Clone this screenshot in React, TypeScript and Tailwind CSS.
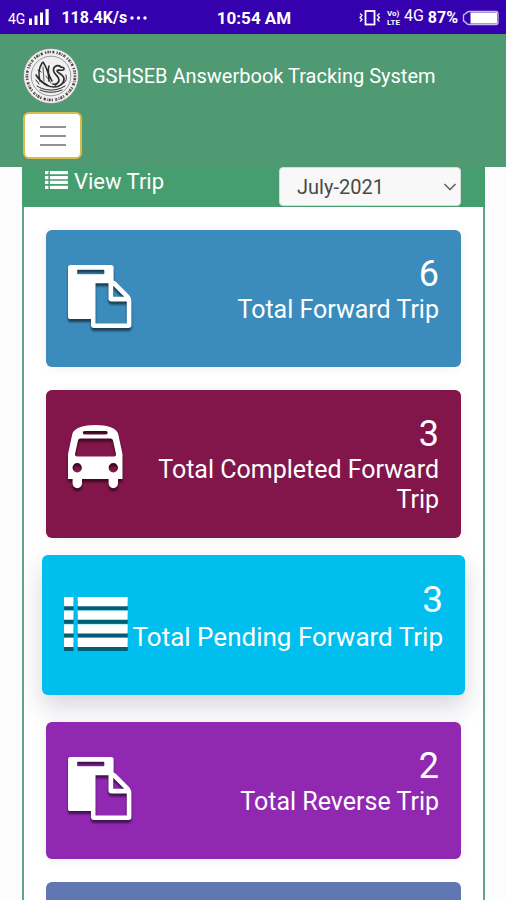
import type { ReactNode } from "react";

function ListIcon({ className }: { className: string }) {
  return (
    <svg viewBox="0 0 64 50" preserveAspectRatio="none" fill="currentColor" className={className} aria-hidden="true">
      {[0, 13.6, 27.2, 40.8].map((y) => (
        <g key={y}>
          <rect x="0" y={y} width="9.5" height="9.2" rx="0.6" />
          <rect x="13.7" y={y} width="50" height="9.2" rx="0.6" />
        </g>
      ))}
    </svg>
  );
}

function PasteIcon() {
  return (
    <svg viewBox="0 0 64 64" fill="currentColor" fillRule="evenodd" className="h-16 w-16 shrink-0 drop-shadow-[0_3px_1px_rgba(0,0,0,0.55)]" aria-hidden="true">
      <path d="M2.6 0H43a2.6 2.6 0 0 1 2.6 2.6V15.5c1 .3 1.900 .9 2.700 1.700L60.500 29.500c1.800 1.800 2.900 4.300 2.900 6.500V60a3 3 0 0 1-3 3H26a3 3 0 0 1-3-3V54H2.600A2.600 2.600 0 0 1 0 51.400V2.600A2.600 2.600 0 0 1 2.600 0ZM10 4.800a.8.800 0 0 0-.8.800v2.800a.8.800 0 0 0 .8.800H35.500a.8.800 0 0 0 .8-.8V5.600a.8.800 0 0 0-.8-.8ZM27.500 18.200V58.500H58.800V36.400H43.500a3 3 0 0 1-3-3V18.200ZM45.200 20.800V31.700H56.200Z" />
    </svg>
  );
}

function BusIcon() {
  return (
    <svg viewBox="0 0 55 64" fill="currentColor" fillRule="evenodd" className="h-16 w-[55px] shrink-0 drop-shadow-[0_3px_1px_rgba(0,0,0,0.55)]" aria-hidden="true">
      <path d="M27.500 0C39 0 49 3.200 50.200 9L54.500 29V54H50V58.500a4.700 4.700 0 0 1-9.400 0V54H14V58.500a4.700 4.700 0 0 1-9.400 0V54H0V29L4.300 9C5.500 3.200 16 0 27.500 0ZM16.500 6a1.700 1.700 0 0 0 0 3.400H38a1.700 1.700 0 0 0 0-3.400ZM12.500 13.500a2.500 2.500 0 0 0-2.500 2L7 29a2 2 0 0 0 2 2.500H46a2 2 0 0 0 2-2.500L45 15.500a2.500 2.500 0 0 0-2.500-2ZM9.200 38a4.700 4.700 0 1 0 0 9.400a4.700 4.700 0 1 0 0-9.400ZM45.300 38a4.700 4.700 0 1 0 0 9.400a4.700 4.700 0 1 0 0-9.400Z" />
    </svg>
  );
}

function Emblem() {
  return (
    <svg viewBox="0 0 56 56" className="h-14 w-14 shrink-0" fill="none" role="img" aria-label="GSHSEB emblem">
      <circle cx="28" cy="28" r="27.500" fill="#f1f0f0" stroke="#6d7b74" strokeWidth="0.6" />
      <circle cx="28" cy="28" r="24" stroke="#4a464b" strokeWidth="2.600" strokeDasharray="1.300 1 2.200 .8 .9 1.200 2.200 2.200" />
      <circle cx="28" cy="28" r="24" stroke="#f1f0f0" strokeWidth="0.500" strokeDasharray="2 2.500" />
      <circle cx="28" cy="28" r="19.800" stroke="#777" strokeWidth="0.700" />
      <g stroke="#2c292e" strokeLinecap="round" strokeLinejoin="round">
        <path strokeWidth="1.500" d="M19 15c-3 5-4 11-2 18M20 14c4 6 6 12 6 19M13 27c3 5 7 8 11 10M26 18c-2 5 0 10 3 15" />
        <path strokeWidth="1.700" d="M38 19c-4-3-9 0-7 5 1 3 5 4 5 8 0 3-3 5-6 4M38 19c3 0 4 2 2 3-3 1-5-1-6 1 0 2 7 3 7 8s-5 8-10 8c-6 0-10-3-13-6" />
        <path strokeWidth="1" d="M14 38c7 5 19 6 28 0M17 42c7 3 15 3 22 0M13 32l3 4M43 27c1 4 0 6-2 8M15 22l3 2" />
        <path strokeWidth="0.800" d="M20 19l1 14M23 28l5 7M32 38l4-4" />
      </g>
    </svg>
  );
}

function StatusBar() {
  return (
    <div className="flex h-[34px] shrink-0 items-center justify-between bg-[#3500ad] pt-0.5 pr-1.5 pl-2 text-white">
      <div className="flex flex-1 items-center">
        <span className="pt-0.5 text-sm leading-5">4G</span>
        <svg viewBox="0 0 22 18" className="ml-1 h-[18px] w-[22px]" fill="currentColor" aria-hidden="true">
          <rect x="0" y="9.500" width="3" height="6.500" />
          <rect x="5.500" y="6.500" width="3" height="9.500" />
          <rect x="11" y="3.500" width="3" height="12.500" />
          <rect x="16.500" y="0" width="3.200" height="16" />
        </svg>
        <span className="ml-2.5 text-base leading-5 font-bold">118.4K/s</span>
        <svg viewBox="0 0 18 4" className="ml-0.5 h-1 w-[18px]" fill="currentColor" aria-hidden="true">
          <circle cx="3" cy="2" r="1.700" />
          <circle cx="9.500" cy="2" r="1.700" />
          <circle cx="16" cy="2" r="1.700" />
        </svg>
      </div>
      <span className="text-[17px] leading-5 font-bold">10:54 AM</span>
      <div className="flex flex-1 items-center justify-end">
        <svg viewBox="0 0 22 18" className="h-[18px] w-[22px]" fill="none" stroke="currentColor" aria-hidden="true">
          <rect x="6.500" y="2" width="9" height="13.500" strokeWidth="1.800" />
          <path d="M1 4.500l2 2-2 2 2 2-2 2M20.500 4.500l-2 2 2 2-2 2 2 2" strokeWidth="1.300" />
        </svg>
        <span className="ml-1.5 flex flex-col text-[8px] leading-[9px] font-bold">
          <span>Vo)</span>
          <span>LTE</span>
        </span>
        <span className="mb-1 ml-1 text-base leading-5">4G</span>
        <span className="ml-1 text-base leading-5 font-bold">87%</span>
        <svg viewBox="0 0 38 16" className="ml-1 h-4 w-[38px]" aria-hidden="true">
          <path d="M7 1.500H34a2 2 0 0 1 2 2V12.500a2 2 0 0 1-2 2H7C4 14.500 4 11.500 1.500 11V5C4 4.500 4 1.500 7 1.500Z" fill="none" stroke="#c9b8ec" strokeWidth="1.300" />
          <rect x="8.500" y="2.500" width="26.500" height="11" fill="#fff" />
        </svg>
      </div>
    </div>
  );
}

function TripCard({
  color,
  icon,
  count,
  label,
  active = false,
}: {
  color: string;
  icon: ReactNode;
  count: number;
  label: string;
  active?: boolean;
}) {
  const card = active
    ? "-mx-1 -mt-1.5 mb-1 min-h-[140px] shadow-[0_12px_24px_0_rgba(40,30,70,0.18)]"
    : "min-h-[137px] shadow-[0_1px_12px_rgba(0,0,0,0.06)]";
  return (
    <section className={`flex items-start justify-between rounded-md px-[22px] py-[23px] text-white ${card} ${color}`}>
      <div className="flex h-[88px] shrink-0 items-center">{icon}</div>
      <div className="text-right">
        <div className={active ? "text-[37px] leading-[44px]" : "text-4xl leading-[42px]"}>{count}</div>
        <div className={active ? "text-[26px] leading-[30px]" : "text-[25px] leading-[30px]"}>{label}</div>
      </div>
    </section>
  );
}

export default function App() {
  return (
    <div className="flex h-screen flex-col overflow-hidden bg-[#fcfcfc] font-[Roboto,'Liberation_Sans',sans-serif]">
      <StatusBar />
      <header className="shrink-0 bg-[#4f9973] px-[23px] pt-3.5 pb-2">
        <div className="flex items-center gap-[13px]">
          <Emblem />
          <h1 className="text-xl leading-7 text-white">GSHSEB Answerbook Tracking System</h1>
        </div>
        <button
          type="button"
          aria-label="Toggle navigation"
          className="mt-2 flex h-[47px] w-[59px] flex-col items-center justify-center gap-[7px] rounded-md border-2 border-[#d6bd4c] bg-white"
        >
          <span className="h-0.5 w-[26px] bg-[#929292]" />
          <span className="h-0.5 w-[26px] bg-[#929292]" />
          <span className="h-0.5 w-[26px] bg-[#929292]" />
        </button>
      </header>
      <main className="mr-[21px] ml-[22px] flex-1 shrink-0 border-x-2 border-[#62a585] bg-white">
        <div className="-mx-0.5 flex h-10 items-start justify-between bg-[#469d70] pr-6 pl-[23px] text-white">
          <h2 className="flex items-center gap-1.5 text-[22px] leading-[30px]">
            <ListIcon className="mb-1 h-[18px] w-[23px]" />
            View Trip
          </h2>
          <div className="relative">
            <select
              aria-label="Month"
              defaultValue="July-2021"
              className="h-[39px] w-[182px] appearance-none rounded-sm border border-[#d5dbd8] bg-[#f8f8f8] pr-8 pl-[17px] text-xl text-[#4a4a4a]"
            >
              <option>July-2021</option>
            </select>
            <svg viewBox="0 0 14 8" className="pointer-events-none absolute top-4 right-1 h-2 w-3.5" fill="none" stroke="#666" strokeWidth="1.600" aria-hidden="true">
              <path d="M1.500 1l5.500 5.500L12.500 1" />
            </svg>
          </div>
        </div>
        <div className="flex flex-col gap-[23px] px-[22px] pt-[23px]">
          <TripCard color="bg-[#3b8cbc]" icon={<PasteIcon />} count={6} label="Total Forward Trip" />
          <TripCard color="bg-[#821549]" icon={<BusIcon />} count={3} label="Total Completed Forward Trip" />
          <TripCard
            active
            color="bg-[#00bfef]"
            icon={<ListIcon className="h-[50px] w-16 shrink-0 drop-shadow-[0_4px_0_rgba(0,0,0,0.5)]" />}
            count={3}
            label="Total Pending Forward Trip"
          />
          <TripCard color="bg-[#9128b2]" icon={<PasteIcon />} count={2} label="Total Reverse Trip" />
          <section className="h-[137px] rounded-md bg-[#6077b4]" />
        </div>
      </main>
    </div>
  );
}
